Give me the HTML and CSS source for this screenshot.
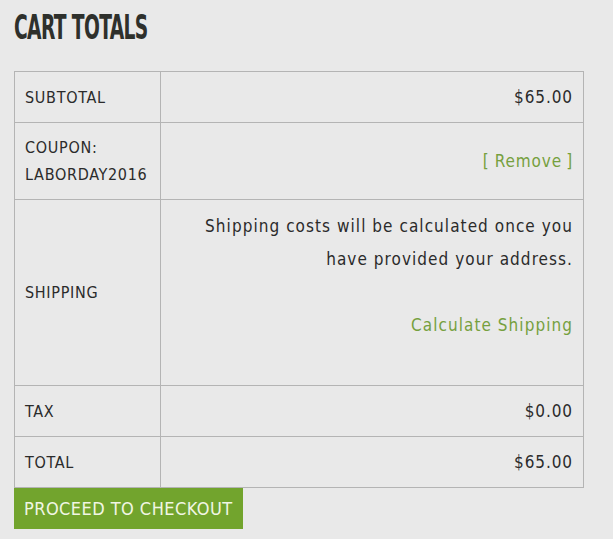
FILE: index.html
```html
<!DOCTYPE html>
<html>
<head>
<meta charset="utf-8">
<link rel="stylesheet" href="styles.css">
</head>
<body>
<div class="cart-totals">
  <h2 class="title">CART TOTALS</h2>
  <table class="totals">
    <tr>
      <th>SUBTOTAL</th>
      <td class="amount">$65.00</td>
    </tr>
    <tr>
      <th>COUPON:<br>LABORDAY2016</th>
      <td class="amount"><a class="link" href="#">[<span class="bracketed">Remove</span>]</a></td>
    </tr>
    <tr>
      <th>SHIPPING</th>
      <td class="shipping">
        <p class="note">Shipping costs will be calculated once you have provided your address.</p>
        <p class="note"><a class="link" href="#">Calculate Shipping</a></p>
      </td>
    </tr>
    <tr>
      <th>TAX</th>
      <td class="amount">$0.00</td>
    </tr>
    <tr>
      <th>TOTAL</th>
      <td class="amount">$65.00</td>
    </tr>
  </table>
  <a class="checkout" href="#">PROCEED TO CHECKOUT</a>
</div>
</body>
</html>
```

FILE: styles.css
```css
html, body {
  margin: 0;
  padding: 0;
  background: #e9e9e9;
}
body {
  font-family: "DejaVu Sans Condensed", "DejaVu Sans", sans-serif;
  color: #2b2b2b;
}
.cart-totals {
  padding: 0 14px;
}
.title {
  margin: 0;
  padding-top: 10px;
  height: 71px;
  box-sizing: border-box;
  font-family: "DejaVu Sans Condensed", sans-serif;
  font-weight: bold;
  font-size: 33px;
  line-height: 36px;
  color: #2e302c;
  letter-spacing: -1px;
  transform: scaleX(0.63);
  transform-origin: left center;
  white-space: nowrap;
}
.totals {
  width: 570px;
  border-collapse: collapse;
  border: 1px solid #b4b4b4;
}
.totals th, .totals td {
  border: 1px solid #b4b4b4;
  padding: 11px 10px;
  height: 28px;
  font-size: 16px;
  line-height: 27px;
  letter-spacing: 0.7px;
  vertical-align: middle;
}
.totals th {
  width: 125px;
  text-align: left;
  font-weight: normal;
}
.totals td.amount {
  text-align: right;
  font-size: 17px;
  letter-spacing: 0.9px;
}
.link {
  color: #76a03e;
  text-decoration: none;
}
.bracketed {
  padding: 0 4px 0 5px;
}
.shipping {
  text-align: right;
}
.totals td.shipping {
  padding: 10px 10px 10px;
  font-size: 17px;
  line-height: 33px;
  letter-spacing: 1.05px;
}
.note {
  margin: 0 0 33px;
}
.checkout {
  display: inline-block;
  background: #72a42d;
  color: #f1f6e4;
  text-decoration: none;
  font-size: 18px;
  line-height: 41px;
  padding: 0 10px;
  letter-spacing: 0.45px;
}
```
